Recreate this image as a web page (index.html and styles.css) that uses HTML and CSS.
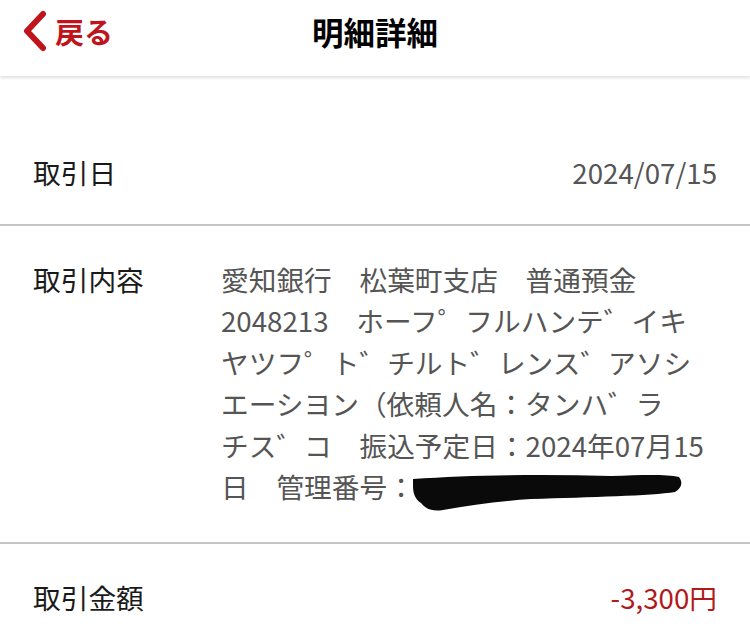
FILE: index.html
```html
<!DOCTYPE html>
<html lang="ja">
<head>
    <meta charset="UTF-8">
    <meta name="viewport" content="width=device-width, initial-scale=1.0">
    <title>明細詳細</title>
    <link rel="stylesheet" href="styles.css">
</head>
<body>
    <header class="topbar">
        <a class="back" href="#">
            <svg class="back-icon" width="26" height="42" viewBox="0 0 26 42">
                <path d="M21 4 L5 21 L21 38" fill="none" stroke="#c0141c" stroke-width="6" stroke-linecap="round" stroke-linejoin="round"/>
            </svg>
            <span>戻る</span>
        </a>
        <h1 class="title">明細詳細</h1>
    </header>

    <main class="detail">
        <div class="row">
            <div class="label">取引日</div>
            <div class="value value-right">2024/07/15</div>
        </div>
        <div class="row">
            <div class="label">取引内容</div>
            <div class="value value-text">愛知銀行　松葉町支店　普通預金　2048213　ホーフ゜フルハンテ゛イキヤツフ゜ト゛チルト゛レンス゛アソシエーシヨン（依頼人名：タンハ゛ラ　チス゛コ　振込予定日：2024年07月15日　管理番号：<span class="redacted"><svg width="272" height="40" viewBox="0 0 272 40"><path d="M2 7 C60 3 130 2 200 4 C230 3 255 2 268 5 C272 10 271 16 264 20 C240 24 180 25 120 27 C90 29 60 33 32 38 C20 40 14 36 10 31 C4 27 2 21 2 14 Z" fill="#0a0a0a"/></svg></span></div>
        </div>
        <div class="row">
            <div class="label">取引金額</div>
            <div class="value value-right amount">-3,300円</div>
        </div>
    </main>
</body>
</html>
```

FILE: styles.css
```css
body {
    margin: 0;
    background-color: #ffffff;
    font-family: "Noto Sans CJK JP", "Noto Sans", sans-serif;
    color: #222222;
}
.topbar {
    position: relative;
    height: 76px;
    display: flex;
    align-items: center;
    justify-content: center;
    box-shadow: 0 2px 3px rgba(0, 0, 0, 0.12);
}
.back {
    position: absolute;
    left: 22px;
    top: 10px;
    display: flex;
    align-items: center;
    gap: 7px;
    color: #c0141c;
    text-decoration: none;
    font-size: 29px;
    font-weight: bold;
}
.title {
    margin: 0 0 14px 0;
    font-size: 31.5px;
    font-weight: bold;
    color: #000000;
}
.detail {
    padding-top: 43px;
}
.row {
    display: flex;
    padding: 33px 33px 30px 33px;
    border-bottom: 2px solid #c6c6c6;
    font-size: 27.7px;
    line-height: 41.5px;
}
.row:last-child {
    border-bottom: none;
}
.label {
    width: 188px;
    flex-shrink: 0;
    color: #1a1a1a;
}
.value {
    flex: 1;
    color: #555555;
}
.value-right {
    text-align: right;
}
.value-text {
    flex: 0 1 487px;
}
.amount {
    color: #b01a1a;
}
.redacted svg {
    vertical-align: -14px;
    margin-left: -4px;
}
```
